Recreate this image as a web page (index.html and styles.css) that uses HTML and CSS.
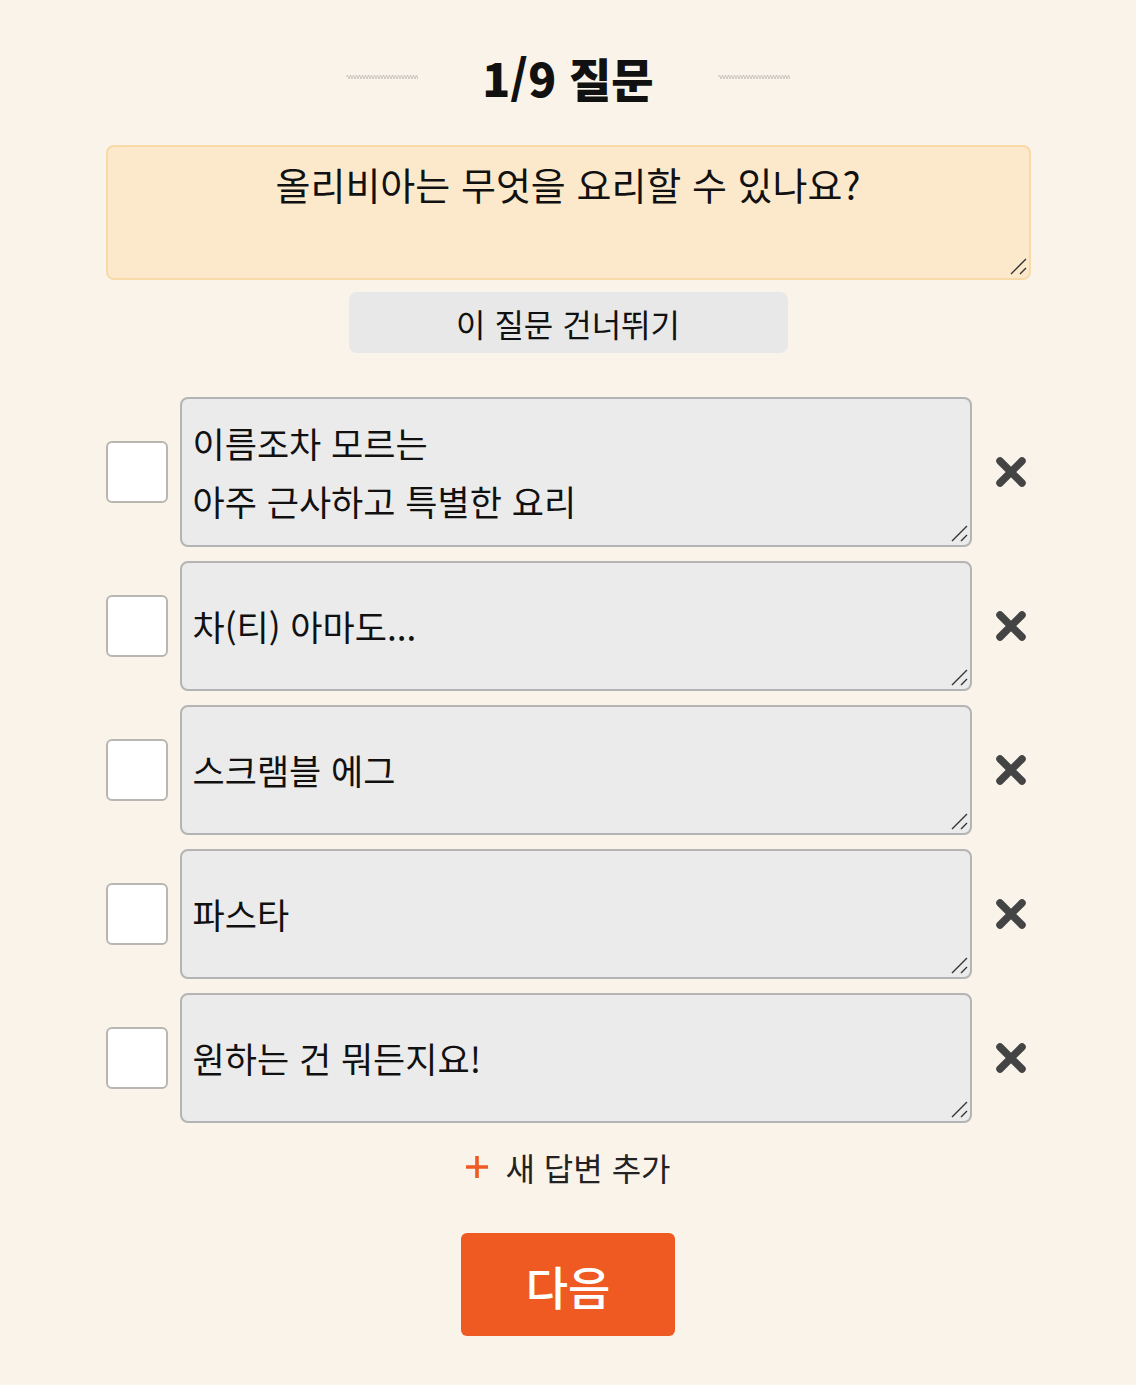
FILE: index.html
```html
<!DOCTYPE html>
<html lang="ko">
<head>
<meta charset="utf-8">
<title>질문</title>
<link rel="stylesheet" href="styles.css">
</head>
<body>
<main class="page">
  <header class="title-row">
    <svg class="wave" width="72" height="6" viewBox="0 0 72 6"><path d="M0 3 l1.5 -2 l1.5 4 l1.5 -4 l1.5 4 l1.5 -4 l1.5 4 l1.5 -4 l1.5 4 l1.5 -4 l1.5 4 l1.5 -4 l1.5 4 l1.5 -4 l1.5 4 l1.5 -4 l1.5 4 l1.5 -4 l1.5 4 l1.5 -4 l1.5 4 l1.5 -4 l1.5 4 l1.5 -4 l1.5 4 l1.5 -4 l1.5 4 l1.5 -4 l1.5 4 l1.5 -4 l1.5 4 l1.5 -4 l1.5 4 l1.5 -4 l1.5 4 l1.5 -4 l1.5 4 l1.5 -4 l1.5 4 l1.5 -4 l1.5 4 l1.5 -4 l1.5 4 l1.5 -4 l1.5 4 l1.5 -4 l1.5 4 l1.5 -4 l1.5 4 l1.5 -4 l1.5 4" fill="none" stroke="#c4c0ba" stroke-width="0.9"/></svg>
    <h1 class="title">1/9 질문</h1>
    <svg class="wave" width="72" height="6" viewBox="0 0 72 6"><path d="M0 3 l1.5 -2 l1.5 4 l1.5 -4 l1.5 4 l1.5 -4 l1.5 4 l1.5 -4 l1.5 4 l1.5 -4 l1.5 4 l1.5 -4 l1.5 4 l1.5 -4 l1.5 4 l1.5 -4 l1.5 4 l1.5 -4 l1.5 4 l1.5 -4 l1.5 4 l1.5 -4 l1.5 4 l1.5 -4 l1.5 4 l1.5 -4 l1.5 4 l1.5 -4 l1.5 4 l1.5 -4 l1.5 4 l1.5 -4 l1.5 4 l1.5 -4 l1.5 4 l1.5 -4 l1.5 4 l1.5 -4 l1.5 4 l1.5 -4 l1.5 4 l1.5 -4 l1.5 4 l1.5 -4 l1.5 4 l1.5 -4 l1.5 4 l1.5 -4 l1.5 4 l1.5 -4 l1.5 4" fill="none" stroke="#c4c0ba" stroke-width="0.9"/></svg>
  </header>

  <div class="field question-field">
    <textarea class="question">올리비아는 무엇을 요리할 수 있나요?</textarea>
    <svg class="grip" width="18" height="18" viewBox="0 0 18 18"><path d="M2 17 L17 2 M11 17 L17 11" stroke="#333" stroke-width="1.4" fill="none"/></svg>
  </div>

  <button class="skip" type="button">이 질문 건너뛰기</button>

  <section class="answers">
    <div class="answer">
      <span class="check"></span>
      <div class="field answer-field">
        <textarea class="answer-text tall">이름조차 모르는
아주 근사하고 특별한 요리</textarea>
        <svg class="grip" width="18" height="18" viewBox="0 0 18 18"><path d="M2 17 L17 2 M11 17 L17 11" stroke="#333" stroke-width="1.4" fill="none"/></svg>
      </div>
      <svg class="remove" width="32" height="32" viewBox="0 0 32 32"><path d="M5 5 L27 27 M27 5 L5 27" stroke="#444" stroke-width="7.5" stroke-linecap="round"/></svg>
    </div>
    <div class="answer">
      <span class="check"></span>
      <div class="field answer-field">
        <textarea class="answer-text">차(티) 아마도...</textarea>
        <svg class="grip" width="18" height="18" viewBox="0 0 18 18"><path d="M2 17 L17 2 M11 17 L17 11" stroke="#333" stroke-width="1.4" fill="none"/></svg>
      </div>
      <svg class="remove" width="32" height="32" viewBox="0 0 32 32"><path d="M5 5 L27 27 M27 5 L5 27" stroke="#444" stroke-width="7.5" stroke-linecap="round"/></svg>
    </div>
    <div class="answer">
      <span class="check"></span>
      <div class="field answer-field">
        <textarea class="answer-text">스크램블 에그</textarea>
        <svg class="grip" width="18" height="18" viewBox="0 0 18 18"><path d="M2 17 L17 2 M11 17 L17 11" stroke="#333" stroke-width="1.4" fill="none"/></svg>
      </div>
      <svg class="remove" width="32" height="32" viewBox="0 0 32 32"><path d="M5 5 L27 27 M27 5 L5 27" stroke="#444" stroke-width="7.5" stroke-linecap="round"/></svg>
    </div>
    <div class="answer">
      <span class="check"></span>
      <div class="field answer-field">
        <textarea class="answer-text">파스타</textarea>
        <svg class="grip" width="18" height="18" viewBox="0 0 18 18"><path d="M2 17 L17 2 M11 17 L17 11" stroke="#333" stroke-width="1.4" fill="none"/></svg>
      </div>
      <svg class="remove" width="32" height="32" viewBox="0 0 32 32"><path d="M5 5 L27 27 M27 5 L5 27" stroke="#444" stroke-width="7.5" stroke-linecap="round"/></svg>
    </div>
    <div class="answer">
      <span class="check"></span>
      <div class="field answer-field">
        <textarea class="answer-text">원하는 건 뭐든지요!</textarea>
        <svg class="grip" width="18" height="18" viewBox="0 0 18 18"><path d="M2 17 L17 2 M11 17 L17 11" stroke="#333" stroke-width="1.4" fill="none"/></svg>
      </div>
      <svg class="remove" width="32" height="32" viewBox="0 0 32 32"><path d="M5 5 L27 27 M27 5 L5 27" stroke="#444" stroke-width="7.5" stroke-linecap="round"/></svg>
    </div>
  </section>

  <button class="add" type="button"><svg class="plus" width="24" height="24" viewBox="0 0 24 24"><path d="M12 1 V23 M1 12 H23" stroke="#ee5a24" stroke-width="3.6"/></svg>새 답변 추가</button>

  <button class="next" type="button">다음</button>
</main>
</body>
</html>
```

FILE: styles.css
```css
* { box-sizing: border-box; }

html, body {
  margin: 0;
  padding: 0;
  background: #f9f3ea;
}

body {
  font-family: "Noto Sans CJK KR", "Noto Sans", sans-serif;
  color: #111;
}

.page {
  width: 925px;
  margin: 0 auto;
  display: flex;
  flex-direction: column;
  align-items: center;
  padding-top: 48px;
}

.title-row {
  display: flex;
  align-items: center;
  justify-content: center;
  gap: 64px;
  height: 58px;
}

.title {
  margin: 0;
  font-family: "Noto Sans CJK KR", sans-serif;
  font-weight: 900;
  font-size: 46px;
  line-height: 58px;
  color: #111;
}

.wave { display: block; }

.field {
  position: relative;
}

.grip {
  position: absolute;
  right: 4px;
  bottom: 5px;
  pointer-events: none;
}

.question-field {
  margin-top: 39px;
  width: 925px;
  height: 135px;
}

.question {
  display: block;
  width: 100%;
  height: 100%;
  background: #fce9cc;
  border: 2px solid #f8d9a8;
  border-radius: 8px;
  padding: 12px 20px;
  font-family: "Noto Sans CJK KR", sans-serif;
  font-size: 38px;
  line-height: 50px;
  text-align: center;
  color: #111;
  resize: none;
  outline: none;
}

.skip {
  margin-top: 12px;
  width: 439px;
  height: 61px;
  background: #e8e8e8;
  border: none;
  border-radius: 8px;
  font-family: "Noto Sans CJK KR", sans-serif;
  font-size: 32px;
  color: #111;
  padding: 0;
}

.answers {
  margin-top: 44px;
  width: 925px;
  display: flex;
  flex-direction: column;
  gap: 14px;
}

.answer {
  display: flex;
  align-items: center;
}

.check {
  width: 62px;
  height: 62px;
  background: #fff;
  border: 2px solid #b9b6b2;
  border-radius: 6px;
  flex: none;
}

.answer-field {
  margin-left: 12px;
  width: 792px;
  flex: none;
}

.answer-text {
  display: block;
  width: 100%;
  height: 130px;
  background: #ebebeb;
  border: 2px solid #b4b4b4;
  border-radius: 8px;
  padding: 34px 10px 0 11px;
  font-family: "Noto Sans CJK KR", sans-serif;
  font-size: 35px;
  line-height: 58px;
  color: #111;
  resize: none;
  outline: none;
  overflow: hidden;
}

.answer-text.tall {
  height: 150px;
  padding-top: 15px;
}

.remove {
  margin-left: 23px;
  flex: none;
}

.add {
  margin-top: 22px;
  background: none;
  border: none;
  padding: 0;
  display: flex;
  align-items: center;
  font-family: "Noto Sans CJK KR", sans-serif;
  font-size: 32px;
  line-height: 44px;
  color: #222;
}

.plus {
  margin-right: 16px;
  flex: none;
}

.next {
  margin-top: 44px;
  width: 214px;
  height: 103px;
  background: #ef5a23;
  border: none;
  border-radius: 6px;
  color: #fff;
  font-family: "Noto Sans CJK KR", sans-serif;
  font-weight: 500;
  font-size: 46px;
  padding: 0;
}
```
